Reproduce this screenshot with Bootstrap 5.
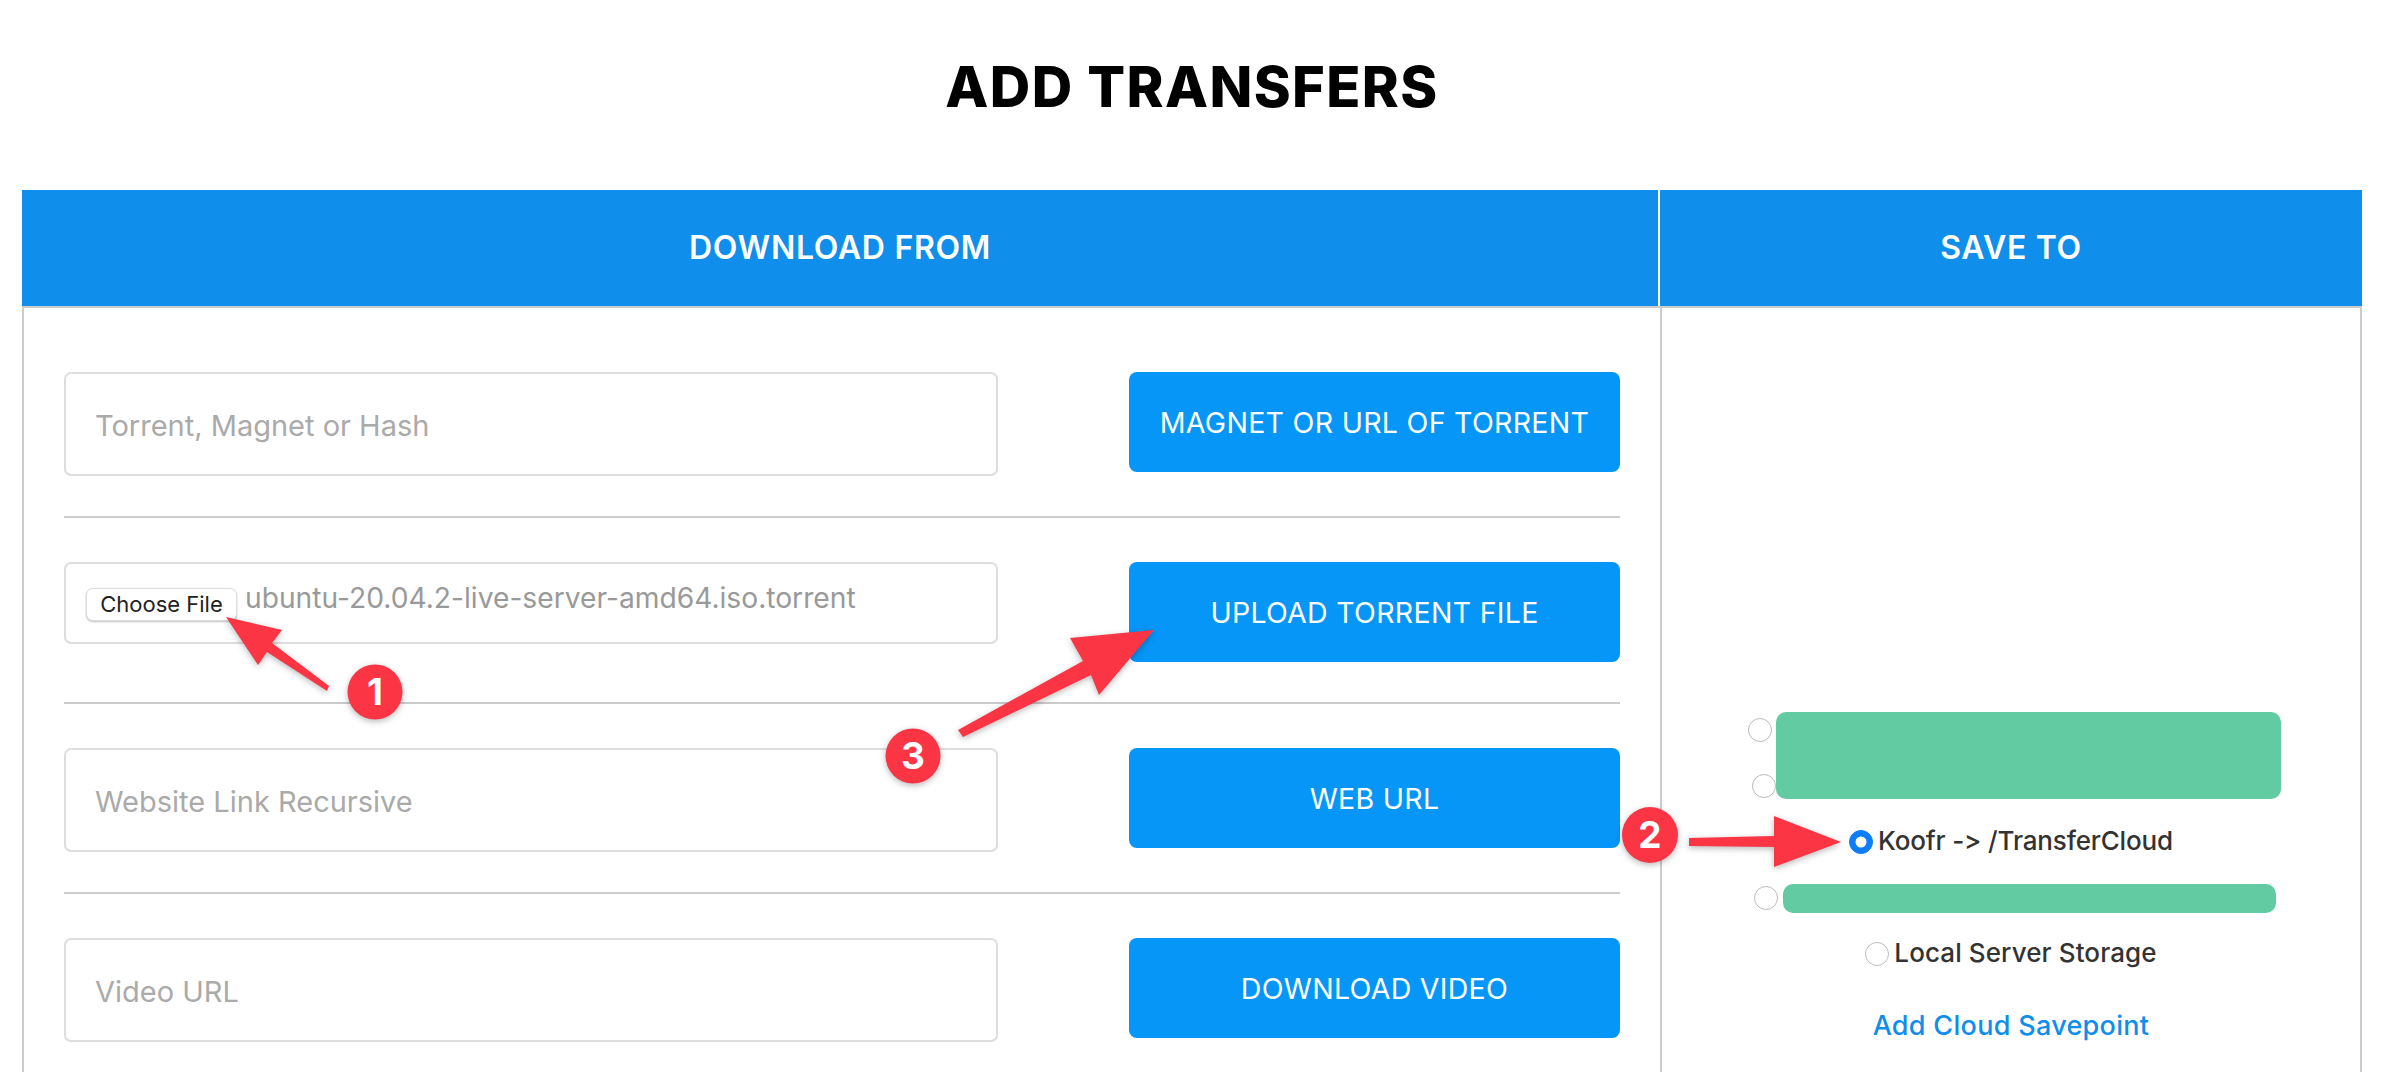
<!DOCTYPE html>
<html lang="en">
<head>
<meta charset="utf-8">
<title>Add Transfers</title>
<link rel="stylesheet" href="https://cdn.jsdelivr.net/npm/bootstrap@5.3.0/dist/css/bootstrap.min.css">
<style>
html, body { height: 1072px; overflow: hidden; }
body { font-family: "Inter", "Liberation Sans", sans-serif; font-feature-settings: "calt" 0, "liga" 0; background: #fff; color: #333; position: relative; }
.page-wrap { padding: 0 24px 0 22px; height: 1072px; display: flex; flex-direction: column; }
.page-title { height: 176px; margin: 0 0 14px; font-size: 56px; font-weight: 800; color: #000; letter-spacing: 1.4px; display: flex; align-items: center; justify-content: center; }
.head-cell { height: 116px; background: #0f8eeb; color: #fff; font-size: 32px; font-weight: 600; letter-spacing: .7px; display: flex; align-items: center; justify-content: center; }
.head-left { width: 70%; border-right: 2px solid #fff; }
.head-right { width: 30%; }
.body-row { flex: 1 1 auto; border-top: 2px solid #ccc; min-height: 0; }
.body-left { width: 70%; border-left: 2px solid #ccc; padding: 64px 40px 0; }
.body-right { width: 30%; border-left: 2px solid #ccc; border-right: 2px solid #ccc; padding-top: 410px; }
.field-row { display: flex; justify-content: space-between; align-items: flex-start; }
.xfer-input { width: 934px; height: 104px; border: 2px solid #ddd; border-radius: 7px; padding: 2px 29px 0; font-size: 29px; color: #999; box-shadow: none; }
.xfer-input::placeholder { color: #aaa; }
.file-box { width: 934px; height: 82px; border: 2px solid #ddd; border-radius: 7px; padding: 0 20px; display: flex; align-items: flex-start; gap: 8px; font-size: 28.2px; color: #999; }
.file-btn { margin-top: 24px; width: 151px; height: 33px; padding: 0; background: #fff; border: 1px solid #ddd; border-radius: 7px; box-shadow: 0 1px 2px rgba(0,0,0,.25); font-size: 22px; line-height: 31px; color: #222; }
.file-name { margin-top: 12px; line-height: 44px; white-space: nowrap; }
.xfer-btn { width: 491px; height: 100px; border: 0; border-radius: 8px; background: #0696f8; color: #fff; font-size: 28.5px; font-weight: 400; letter-spacing: .3px; padding: 2px 0 0; }
.xfer-btn:hover { background: #0696f8; color: #fff; }
.xfer-rule { margin: 40px 0 44px; border: 0; border-top: 2px solid #ccc; opacity: 1; }
.save-list { position: relative; }
.save-opt { height: 24px; margin-bottom: 32px; display: flex; align-items: center; justify-content: center; font-size: 26px; font-weight: 500; color: #333; white-space: nowrap; }
.save-radio { width: 24px; height: 24px; margin: 0; flex: none; border: 1px solid #bbb; }
.save-radio:checked { background-color: #0d7ef5; border-color: #0d7ef5; }
.save-text { margin-left: 5px; position: relative; top: -2px; }
.koofr-text { letter-spacing: -.15px; }
.local-text { letter-spacing: .1px; }
.mask-a { width: 502px; } .mask-b { width: 494px; } .mask-c { width: 490px; }
.mask-box { position: absolute; background: #62cba1; border-radius: 10px; }
.mask-top { left: 114px; top: -6px; width: 505px; height: 87px; }
.mask-low { left: 121px; top: 166px; width: 493px; height: 29px; }
.save-link { margin-top: 48px; height: 24px; line-height: 24px; text-align: center; font-size: 27px; font-weight: 500; letter-spacing: .3px; }
.save-link a { color: #0f8eeb; text-decoration: none; }
.callouts { position: absolute; left: 0; top: 0; pointer-events: none; }
.callout-art { fill: #fc3545; filter: drop-shadow(0 2px 3px rgba(0,0,0,.28)); }
.callout-num { fill: #fff; font-family: "Inter", sans-serif; font-size: 37px; font-weight: 700; text-anchor: middle; }
</style>
</head>
<body>
<div class="page-wrap">
  <h1 class="page-title">ADD TRANSFERS</h1>
  <div class="d-flex">
    <div class="head-cell head-left">DOWNLOAD FROM</div>
    <div class="head-cell head-right">SAVE TO</div>
  </div>
  <div class="d-flex body-row">
    <div class="body-left">
      <div class="field-row">
        <input class="form-control xfer-input" type="text" placeholder="Torrent, Magnet or Hash">
        <button class="btn xfer-btn" type="button">MAGNET OR URL OF TORRENT</button>
      </div>
      <hr class="xfer-rule">
      <div class="field-row">
        <div class="file-box">
          <button class="btn file-btn" type="button">Choose File</button>
          <span class="file-name">ubuntu-20.04.2-live-server-amd64.iso.torrent</span>
        </div>
        <button class="btn xfer-btn" type="button">UPLOAD TORRENT FILE</button>
      </div>
      <hr class="xfer-rule">
      <div class="field-row">
        <input class="form-control xfer-input" type="text" placeholder="Website Link Recursive">
        <button class="btn xfer-btn" type="button">WEB URL</button>
      </div>
      <hr class="xfer-rule">
      <div class="field-row">
        <input class="form-control xfer-input" type="text" placeholder="Video URL">
        <button class="btn xfer-btn" type="button">DOWNLOAD VIDEO</button>
      </div>
    </div>
    <div class="body-right">
      <div class="save-list">
        <div class="save-opt"><input class="form-check-input save-radio" type="radio" name="dest"><span class="mask-a"></span></div>
        <div class="save-opt"><input class="form-check-input save-radio" type="radio" name="dest"><span class="mask-b"></span></div>
        <div class="save-opt"><input class="form-check-input save-radio" type="radio" name="dest" checked><span class="save-text koofr-text">Koofr -&gt; /TransferCloud</span></div>
        <div class="save-opt"><input class="form-check-input save-radio" type="radio" name="dest"><span class="mask-c"></span></div>
        <div class="save-opt mb-0"><input class="form-check-input save-radio" type="radio" name="dest"><span class="save-text local-text">Local Server Storage</span></div>
        <div class="save-link"><a href="#">Add Cloud Savepoint</a></div>
        <div class="mask-box mask-top"></div>
        <div class="mask-box mask-low"></div>
      </div>
    </div>
  </div>
</div>
<svg class="callouts" width="2386" height="1072" viewBox="0 0 2386 1072">
  <g class="callout-art">
    <polygon points="226,617 282,630 272,643 329,686 327,691 267,652 258,665"/>
    <circle cx="375" cy="692" r="27.5"/>
    <polygon points="1154,630 1070,638 1083,661 958,730 963,737 1091,675 1099,695"/>
    <circle cx="913" cy="756" r="27.5"/>
    <polygon points="1689,838 1774,836 1774,816 1841,842 1774,867 1774,847 1689,846"/>
    <circle cx="1650" cy="835" r="28"/>
  </g>
  <text class="callout-num" x="375" y="705">1</text>
  <text class="callout-num" x="913" y="769">3</text>
  <text class="callout-num" x="1650" y="848">2</text>
</svg>
<script src="https://cdn.jsdelivr.net/npm/bootstrap@5.3.0/dist/js/bootstrap.bundle.min.js"></script>
</body>
</html>
